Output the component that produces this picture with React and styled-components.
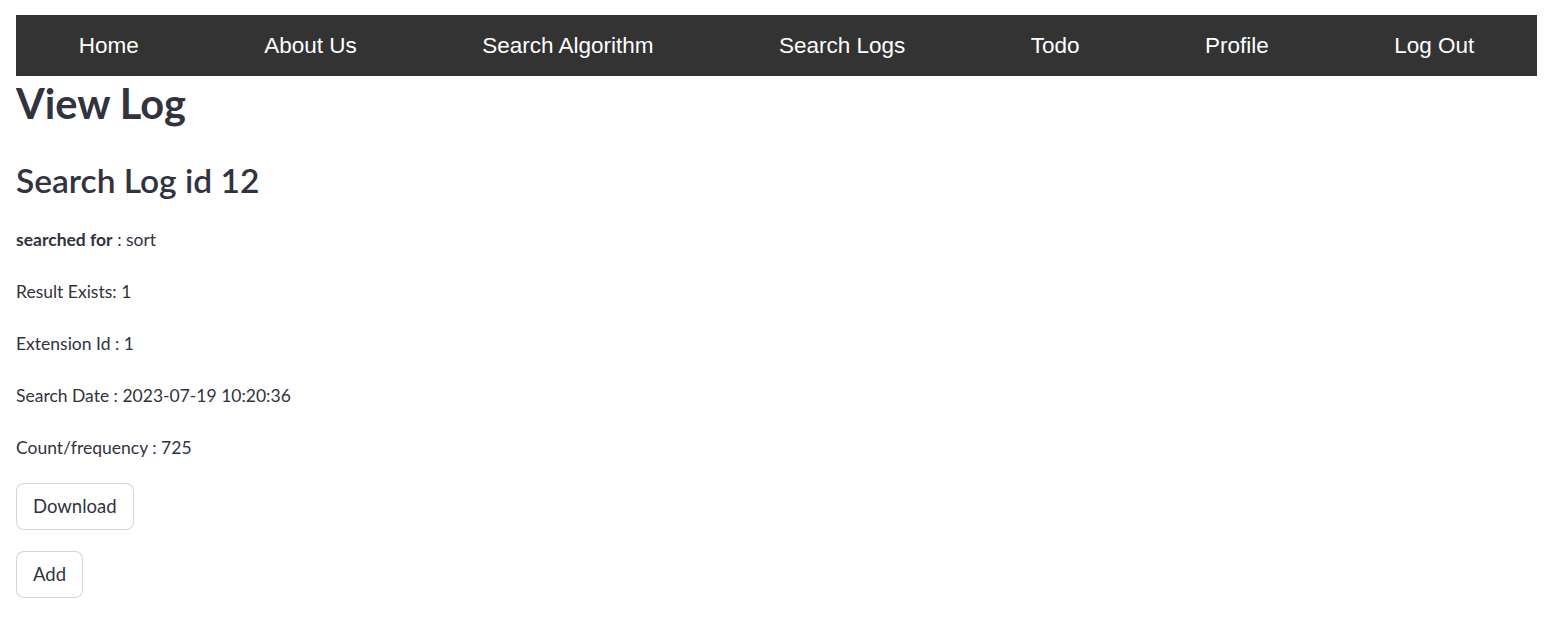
import styled, { createGlobalStyle } from 'styled-components';

const GlobalStyle = createGlobalStyle`
  body {
    margin: 15px 16px;
    background: #ffffff;
    font-family: "Source Sans Pro", Lato, "Noto Sans", sans-serif;
    color: rgb(49, 51, 63);
  }
`;

const links = ['Home', 'About Us', 'Search Algorithm', 'Search Logs', 'Todo', 'Profile', 'Log Out'];

const fields = [
  { label: 'searched for', bold: true, value: ' : sort' },
  { label: 'Result Exists: 1' },
  { label: 'Extension Id : 1' },
  { label: 'Search Date : 2023-07-19 10:20:36' },
  { label: 'Count/frequency : 725' },
];

const App = () => {
  return (
    <>
      <GlobalStyle />
      <NavBar>
        {links.map((l) => (
          <NavLink key={l} href="#">
            {l}
          </NavLink>
        ))}
      </NavBar>
      <Main>
        <Title>View Log</Title>
        <SubTitle>Search Log id 12</SubTitle>
        <Fields>
          {fields.map((f) => (
            <Field key={f.label}>
              {f.bold ? <strong>{f.label}</strong> : f.label}
              {f.value}
            </Field>
          ))}
        </Fields>
        <Buttons>
          <Button>Download</Button>
          <Button>Add</Button>
        </Buttons>
      </Main>
    </>
  );
};
export default App;

const NavBar = styled.nav`
  display: flex;
  justify-content: space-around;
  align-items: center;
  height: 61px;
  background-color: #333333;
`;

const NavLink = styled.a`
  font-family: "Liberation Sans", Arial, sans-serif;
  font-size: 22.5px;
  color: #ffffff;
  text-decoration: none;
`;

const Main = styled.main`
  display: flex;
  flex-direction: column;
  align-items: flex-start;
`;

const Title = styled.h1`
  margin: 3px 0 0;
  font-size: 41.5px;
  font-weight: 700;
  line-height: 1.2;
`;

const SubTitle = styled.h2`
  margin: 31px 0 0;
  font-size: 33.5px;
  font-weight: 600;
  line-height: 1.2;
`;

const Fields = styled.div`
  display: flex;
  flex-direction: column;
  gap: 24px;
  margin-top: 26px;
`;

const Field = styled.p`
  margin: 0;
  font-size: 17.5px;
  line-height: 28px;
  strong {
    font-weight: 700;
  }
`;

const Buttons = styled.div`
  display: flex;
  flex-direction: column;
  align-items: flex-start;
  gap: 21px;
  margin-top: 21px;
`;

const Button = styled.button`
  height: 47px;
  padding: 0 16px;
  font-family: inherit;
  font-size: 18.5px;
  color: rgb(49, 51, 63);
  background: #ffffff;
  border: 1px solid rgba(49, 51, 63, 0.2);
  border-radius: 8px;
  cursor: pointer;
`;
